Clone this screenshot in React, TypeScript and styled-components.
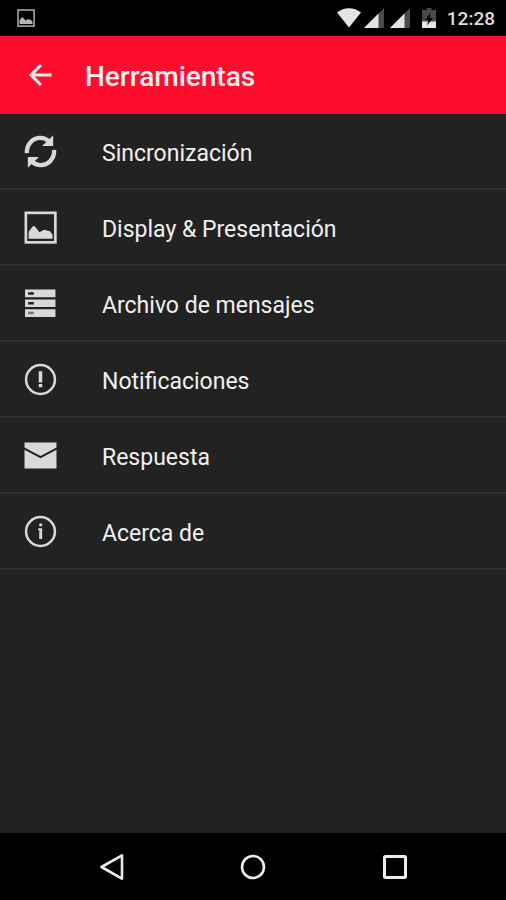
import React from "react";
import styled, { createGlobalStyle } from "styled-components";

const GlobalStyle = createGlobalStyle`
  * { box-sizing: border-box; }
  body { margin: 0; background: #222222; font-family: Roboto, "Noto Sans", sans-serif; }
  button { font: inherit; color: inherit; background: none; border: 0; padding: 0; cursor: pointer; }
  svg { display: block; flex: none; }
`;

const Screen = styled.div`
  display: flex;
  flex-direction: column;
  min-height: 100vh;
  background: #222222;
  color: #f0f0f0;
`;

const StatusBar = styled.div`
  display: flex;
  align-items: center;
  justify-content: space-between;
  height: 36px;
  padding: 0 11px 0 17px;
  background: #000000;
`;

const StatusIcons = styled.div`
  display: flex;
  align-items: center;
`;

const Signals = styled.div`
  display: flex;
  gap: 6px;
  margin: 0 12px 0 3px;
`;

const Clock = styled.time`
  margin-left: 11px;
  padding-top: 2px;
  font-size: 19px;
  line-height: 24px;
  font-weight: 500;
  color: #dedede;
`;

const AppBar = styled.header`
  display: flex;
  align-items: center;
  gap: 29px;
  height: 78px;
  padding: 0 24px;
  background: #ff0c2e;
  color: #fff0f1;
`;

const BackButton = styled.button`
  display: grid;
  place-items: center;
  width: 32px;
  height: 32px;
`;

const Title = styled.h1`
  margin: 0;
  padding-top: 4px;
  font-size: 28px;
  line-height: 32px;
  font-weight: 500;
`;

const Menu = styled.ul`
  flex: 1;
  margin: 0;
  padding: 0;
  list-style: none;
`;

const MenuItem = styled.li`
  border-bottom: 2px solid #2e2e2e;
`;

const MenuButton = styled.button`
  display: flex;
  align-items: center;
  gap: 45px;
  width: 100%;
  height: 74px;
  padding: 0 24px;
  text-align: left;
`;

const MenuLabel = styled.span`
  padding-top: 6px;
  font-size: 23px;
  line-height: 28px;
`;

const NavBar = styled.nav`
  display: grid;
  grid-template-columns: repeat(3, 1fr);
  height: 67px;
  padding: 0 8%;
  background: #000000;
`;

const NavButton = styled.button`
  display: grid;
  place-items: center;
`;

const ink = "#d9d9d9";

const PictureIcon = ({ size = 33, color = ink }: { size?: number; color?: string }) => (
  <svg width={size} height={size} viewBox="0 0 32 32" aria-hidden="true">
    <rect x="1.8" y="1.8" width="28.6" height="28.6" fill="none" stroke={color} strokeWidth="2.6" />
    <path d="M4.5 20 8 15.500Q9.500 13.500 11 15.500L15 20.500 18.500 18.600Q20.500 17.800 21.800 18.800L25 19.500 27.700 23V26.800H4.500Z" fill={color} />
  </svg>
);

const SyncIcon = () => (
  <svg width="33" height="33" viewBox="0 0 32 32" fill="none" stroke={ink} strokeWidth="4.2" aria-hidden="true">
    <path d="M2.8 17.5C2.3 9 8.5 2.8 15.5 2.8c3.6 0 6.5 1.2 9 3.6" />
    <path d="M28.3.2V10.7H17.5Z" fill={ink} stroke="none" />
    <path d="M29.2 14.5C29.7 23 23.5 29.2 16.5 29.2c-3.6 0-6.5-1.2-9-3.6" />
    <path d="M3.7 31.8V21.3H14.5Z" fill={ink} stroke="none" />
  </svg>
);

const ArchiveIcon = () => (
  <svg width="33" height="33" viewBox="0 0 32 32" aria-hidden="true">
    <path d="M1 2.5h29.5v7.5H1ZM1 12h29.5v7.5H1ZM1 21.5h29.5V29H1Z" fill={ink} />
    <path d="M4 5h5.5v2.5H4ZM4 14.5h5.5V17H4Z" fill="#222222" />
    <path d="M4 24h5.5v2.5H4Z" fill="#777777" />
  </svg>
);

const AlertIcon = () => (
  <svg width="33" height="33" viewBox="0 0 32 32" fill={ink} aria-hidden="true">
    <circle cx="16" cy="16" r="14" fill="none" stroke={ink} strokeWidth="2.4" />
    <path d="M14.3 8h3.4v11h-3.4ZM14.3 20.3h3.4v3.2h-3.4Z" />
  </svg>
);

const MailIcon = () => (
  <svg width="33" height="33" viewBox="0 0 32 32" fill={ink} aria-hidden="true">
    <path d="M.5 3.500H31.500V8.200L16 16.500.5 8.200Z" />
    <path d="M.5 10.500 16 18.700 31.500 10.500V28.500H.5Z" />
  </svg>
);

const InfoIcon = () => (
  <svg width="33" height="33" viewBox="0 0 32 32" fill={ink} aria-hidden="true">
    <circle cx="16" cy="16" r="14" fill="none" stroke={ink} strokeWidth="2.4" />
    <path d="M14.8 8.200h2.800v2.800h-2.800ZM13.800 12.800h3.800v10.400h-2.800v-8.400h-1Z" />
  </svg>
);

const ArrowIcon = () => (
  <svg width="24" height="24" viewBox="0 0 24 24" fill="none" stroke="currentColor" strokeWidth="3" aria-hidden="true">
    <path d="M13 2 3 12l10 10M3 12h20.500" />
  </svg>
);

const WifiIcon = () => (
  <svg width="24" height="20" viewBox="0 0 24 20" aria-hidden="true">
    <path d="M0 4.5C7-1.2 17-1.2 24 4.5L12 19.5Z" fill="#e4e4e4" />
  </svg>
);

const SignalIcon = () => (
  <svg width="20" height="20" viewBox="0 0 20 20" aria-hidden="true">
    <path d="M20 0V20H0Z" fill="#4a4a4a" />
    <path d="M14.5 5.5V20H0Z" fill="#e4e4e4" />
  </svg>
);

const BatteryIcon = () => (
  <svg width="14" height="20" viewBox="0 0 14 20" aria-hidden="true">
    <path d="M4.5 0h5v2H14V20H0V2h4.5Z" fill="#4a4a4a" />
    <path d="M0 13.5h14V20H0Z" fill="#e4e4e4" />
    <path d="M8.5 5 3 12h3.500L5 17.500 11 10H7.500Z" fill="#000000" />
  </svg>
);

const items = [
  { label: "Sincronización", Icon: SyncIcon },
  { label: "Display & Presentación", Icon: PictureIcon },
  { label: "Archivo de mensajes", Icon: ArchiveIcon },
  { label: "Notificaciones", Icon: AlertIcon },
  { label: "Respuesta", Icon: MailIcon },
  { label: "Acerca de", Icon: InfoIcon },
];

export default function App() {
  return (
    <>
      <GlobalStyle />
      <Screen>
        <StatusBar>
          <PictureIcon size={18} color="#b4b4b4" />
          <StatusIcons>
            <WifiIcon />
            <Signals>
              <SignalIcon />
              <SignalIcon />
            </Signals>
            <BatteryIcon />
            <Clock>12:28</Clock>
          </StatusIcons>
        </StatusBar>
        <AppBar>
          <BackButton aria-label="Volver">
            <ArrowIcon />
          </BackButton>
          <Title>Herramientas</Title>
        </AppBar>
        <Menu>
          {items.map(({ label, Icon }) => (
            <MenuItem key={label}>
              <MenuButton>
                <Icon />
                <MenuLabel>{label}</MenuLabel>
              </MenuButton>
            </MenuItem>
          ))}
        </Menu>
        <NavBar aria-label="Sistema">
          <NavButton aria-label="Atrás">
            <svg width="26" height="28" viewBox="0 0 26 28" fill="none" stroke="#ececec" strokeWidth="2.6" strokeLinejoin="round" aria-hidden="true">
              <path d="M24 2.3V25.7L3.5 14Z" />
            </svg>
          </NavButton>
          <NavButton aria-label="Inicio">
            <svg width="26" height="26" viewBox="0 0 26 26" fill="none" stroke="#ececec" strokeWidth="2.6" aria-hidden="true">
              <circle cx="13" cy="13" r="11" />
            </svg>
          </NavButton>
          <NavButton aria-label="Recientes">
            <svg width="24" height="24" viewBox="0 0 24 24" fill="none" stroke="#ececec" strokeWidth="3" aria-hidden="true">
              <rect x="1.5" y="1.5" width="21" height="21" rx="1" />
            </svg>
          </NavButton>
        </NavBar>
      </Screen>
    </>
  );
}
